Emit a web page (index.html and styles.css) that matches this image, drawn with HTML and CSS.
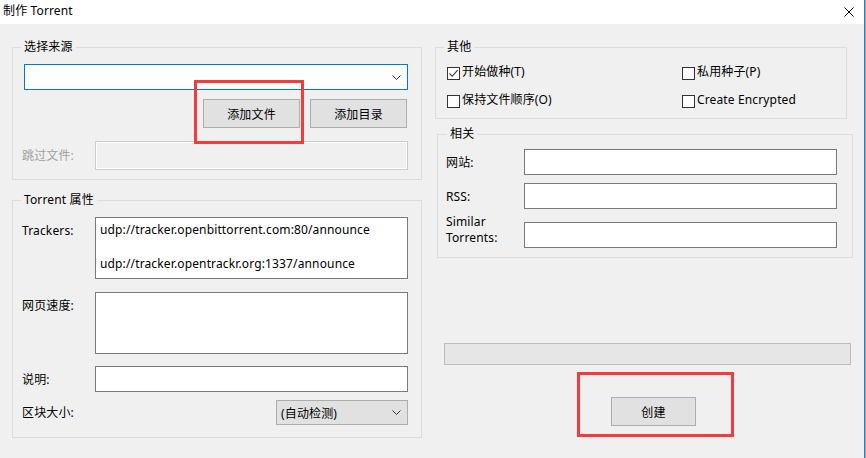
FILE: index.html
```html
<!DOCTYPE html>
<html lang="zh-CN">
<head>
<meta charset="utf-8">
<title>制作 Torrent</title>
<link rel="stylesheet" href="styles.css">
</head>
<body>
<div class="window">
  <div class="titlebar">
    <span class="title">制作 Torrent</span>
    <svg class="close" width="10" height="10" viewBox="0 0 10 10"><path d="M0.5 0.5L9.5 9.5M9.5 0.5L0.5 9.5" stroke="#000" stroke-width="1" fill="none"/></svg>
  </div>
  <div class="content">
    <div class="col-left">
      <div class="group g-source">
        <div class="legend">选择来源</div>
        <div class="combo combo-source">
          <svg class="chev" width="9" height="5" viewBox="0 0 9 5"><path d="M0.5 0.5L4.5 4.5L8.5 0.5" stroke="#333" fill="none"/></svg>
        </div>
        <div class="btn-row">
          <div class="btn">添加文件</div>
          <div class="btn">添加目录</div>
        </div>
        <div class="row skip-row">
          <span class="label disabled">跳过文件:</span>
          <div class="box box-disabled"></div>
        </div>
      </div>
      <div class="group g-props">
        <div class="legend">Torrent 属性</div>
        <div class="row row-top">
          <span class="label">Trackers:</span>
          <div class="box area">udp://tracker.openbittorrent.com:80/announce<br><br>udp://tracker.opentrackr.org:1337/announce</div>
        </div>
        <div class="row row-top gap13">
          <span class="label">网页速度:</span>
          <div class="box area"></div>
        </div>
        <div class="row gap12">
          <span class="label">说明:</span>
          <div class="box input"></div>
        </div>
        <div class="row gap8">
          <span class="label">区块大小:</span>
          <div class="combo combo-size">
            <span>(自动检测)</span>
            <svg class="chev" width="9" height="5" viewBox="0 0 9 5"><path d="M0.5 0.5L4.5 4.5L8.5 0.5" stroke="#333" fill="none"/></svg>
          </div>
        </div>
      </div>
    </div>
    <div class="col-right">
      <div class="group g-other">
        <div class="legend">其他</div>
        <div class="checks">
          <label class="check"><span class="cb checked"><svg width="11" height="11" viewBox="0 0 11 11"><path d="M1.5 5.5L4.2 8.3L9.6 2.2" stroke="#333" stroke-width="1.1" fill="none"/></svg></span><span class="ctext">开始做种(T)</span></label>
          <label class="check"><span class="cb"></span><span class="ctext">私用种子(P)</span></label>
          <label class="check"><span class="cb"></span><span class="ctext">保持文件顺序(O)</span></label>
          <label class="check"><span class="cb"></span><span class="ctext">Create Encrypted</span></label>
        </div>
      </div>
      <div class="group g-related">
        <div class="legend">相关</div>
        <div class="row r-row">
          <span class="label rlabel">网站:</span>
          <div class="box input"></div>
        </div>
        <div class="row r-row gap8">
          <span class="label rlabel">RSS:</span>
          <div class="box input"></div>
        </div>
        <div class="row r-row gap13">
          <span class="label rlabel two-line">Similar<br>Torrents:</span>
          <div class="box input"></div>
        </div>
      </div>
      <div class="progress"></div>
      <div class="btn btn-create">创建</div>
    </div>
  </div>
  <div class="mark mark-1"></div>
  <div class="mark mark-2"></div>
</div>
</body>
</html>
```
FILE: styles.css
```css
* { box-sizing: border-box; }
html, body {
  margin: 0;
  padding: 0;
  background: #a9a9a9;
  width: 866px;
  height: 458px;
  overflow: hidden;
}
body {
  font-family: "Noto Sans", "Noto Sans CJK SC", sans-serif;
  font-size: 12px;
  letter-spacing: 0.14px;
  color: #000;
}
.window {
  position: relative;
  width: 865px;
  height: 458px;
  border-right: 1px solid #1883d7;
  display: flex;
  flex-direction: column;
  background: #f0f0f0;
}
.titlebar {
  height: 24px;
  background: #fff;
  display: flex;
  align-items: center;
  justify-content: space-between;
  padding: 0 10px 2px 3px;
}
.title { line-height: 16px; }
.close { display: block; margin-top: 1px; }
.content {
  flex: 1;
  display: flex;
  padding-top: 23px;
  padding-left: 12px;
}
.col-left {
  width: 410px;
  display: flex;
  flex-direction: column;
}
.col-right {
  width: 418px;
  margin-left: 13px;
  display: flex;
  flex-direction: column;
}
.group {
  position: relative;
  border: 1px solid #dcdcdc;
}
.legend {
  position: absolute;
  top: -9px;
  left: 8px;
  padding: 0 3px;
  background: #f0f0f0;
  line-height: 16px;
}
.g-source {
  height: 133px;
  padding: 16px 13px 9px 9px;
}
.g-props {
  margin-top: 20px;
  height: 238px;
  padding: 16px 13px 12px 9px;
}
.combo {
  display: flex;
  align-items: center;
  justify-content: space-between;
}
.combo-source {
  margin-left: 2px;
  height: 26px;
  background: #fff;
  border: 1px solid #0078d7;
  padding-right: 6px;
  justify-content: flex-end;
}
.combo-size {
  margin-left: auto;
  width: 132px;
  height: 25px;
  background: #e1e1e1;
  border: 1px solid #adadad;
  padding: 0 6px 0 4px;
}
.chev { display: block; }
.btn-row {
  display: flex;
  justify-content: flex-end;
  gap: 10px;
  margin-top: 9px;
  padding-right: 1px;
}
.btn {
  width: 97px;
  height: 29px;
  background: #e1e1e1;
  border: 1px solid #adadad;
  display: flex;
  align-items: center;
  justify-content: center;
}
.row {
  display: flex;
  align-items: center;
}
.row-top { align-items: flex-start; }
.row-top .label { padding-top: 5px; }
.skip-row { margin-top: 13px; }
.gap13 { margin-top: 13px; }
.gap12 { margin-top: 12px; }
.gap8 { margin-top: 8px; }
.label {
  width: 73px;
  flex: none;
  line-height: 17px;
}
.disabled { color: #a0a0a0; }
.box {
  width: 313px;
  background: #fff;
  border: 1px solid #7a7a7a;
}
.box-disabled {
  height: 29px;
  background: #f0f0f0;
  border: 1px solid #cccccc;
  box-shadow: inset 0 0 0 1px #fff;
}
.area {
  height: 62px;
  padding: 3px 4px;
  line-height: 17px;
  white-space: nowrap;
  overflow: hidden;
}
.input { height: 26px; }
.g-other {
  width: 412px;
  height: 72px;
  padding: 13px 8px 7px 11px;
}
.checks {
  display: grid;
  grid-template-columns: 235px 1fr;
  grid-auto-rows: 20px;
  row-gap: 8px;
}
.check {
  display: flex;
  align-items: flex-start;
  gap: 2px;
}
.ctext {
  line-height: 17px;
  padding-top: 2px;
}
.cb {
  width: 13px;
  height: 13px;
  border: 1px solid #333;
  background: #fff;
  margin-top: 6px;
  display: flex;
  align-items: center;
  justify-content: center;
}
.cb svg { display: block; }
.g-related {
  margin-top: 15px;
  margin-left: 2px;
  width: 416px;
  height: 124px;
  padding: 14px 15px 9px 8px;
}
.g-related .legend { left: 9px; }
.rlabel { width: 78px; }
.two-line {
  align-self: flex-start;
  margin-top: -8px;
  line-height: 16px;
}
.progress {
  margin-top: 85px;
  margin-left: 9px;
  width: 407px;
  height: 22px;
  background: #e6e6e6;
  border: 1px solid #bcbcbc;
}
.btn-create {
  margin-top: 32px;
  margin-left: 176px;
  width: 85px;
}
.mark {
  position: absolute;
  border: 3px solid #f43b3d;
}
.mark-1 { left: 194px; top: 80px; width: 110px; height: 64px; }
.mark-2 { left: 577px; top: 372px; width: 157px; height: 65px; }
```
